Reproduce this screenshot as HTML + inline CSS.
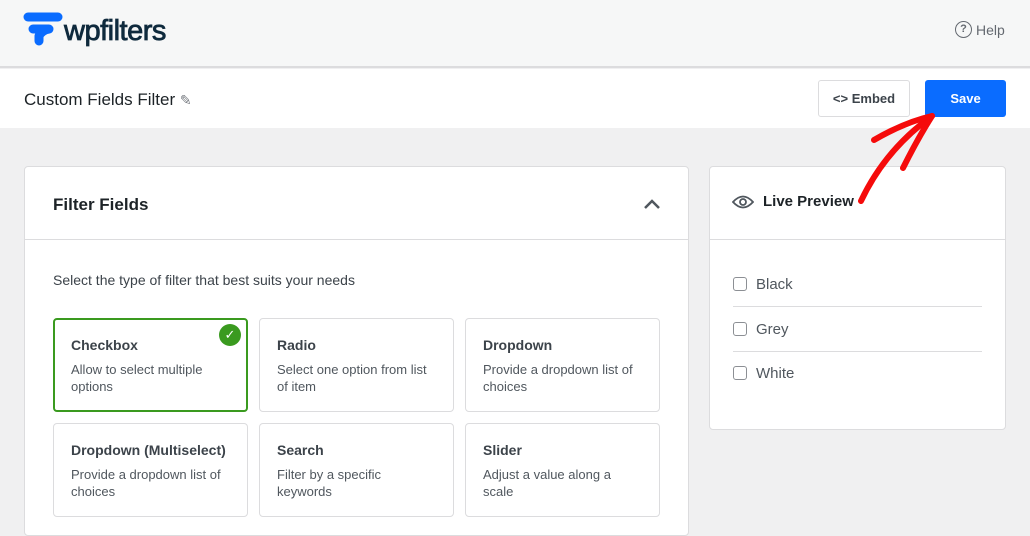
<!DOCTYPE html>
<html><head><meta charset="utf-8"><style>
*{box-sizing:border-box;margin:0;padding:0}
body{width:1030px;height:524px;overflow:hidden;background:#f0f0f1;font-family:"Liberation Sans",sans-serif;color:#1d2327;position:relative}
.top{position:absolute;left:0;top:0;width:1030px;height:68px;background:#f6f7f7;border-bottom:2px solid #dcdcde}
.bar{position:absolute;left:0;top:69px;width:1030px;height:59px;background:#fff}
.card{position:absolute;background:#fff;border:1px solid #dcdcde;border-radius:4px}
.opt{position:absolute;width:195px;height:94px;border:1px solid #dcdcde;border-radius:4px;background:#fff;padding:18px 17px}
.opt b{display:block;font-size:14px;color:#3c434a;margin-bottom:8px}
.opt span{display:block;font-size:13px;line-height:17px;color:#50575e}
.cb{position:absolute;left:733px;font-size:15px;color:#50575e}
.cb i{display:inline-block;width:14px;height:14px;border:1.5px solid #8c8f94;border-radius:3px;vertical-align:-2px;margin-right:9px}
.sep{position:absolute;left:733px;width:249px;height:1px;background:#dcdcde}
</style></head><body>
<div class="top"></div>
<svg style="position:absolute;left:22px;top:11px" width="42" height="38" viewBox="0 0 42 38"><path d="M6 6H36" stroke="#0a6cff" stroke-width="9" stroke-linecap="round"/><path d="M11 18H27Q20 19 17 25L17 30" stroke="#0a6cff" stroke-width="9" stroke-linecap="round" stroke-linejoin="round" fill="none"/></svg>
<div style="position:absolute;left:64px;top:15px;font-size:29px;color:#0f2a3d;letter-spacing:-0.5px;-webkit-text-stroke:0.8px #0f2a3d">wpfilters</div>
<div style="position:absolute;left:955px;top:21px;font-size:14px;color:#646970;display:flex;align-items:center;gap:4px;height:17px"><span style="display:inline-block;width:17px;height:17px;border:1.5px solid #646970;border-radius:50%;font-size:11px;text-align:center;line-height:14px;font-weight:bold">?</span>Help</div>
<div class="bar"></div>
<div style="position:absolute;left:24px;top:90px;font-size:17px;color:#1d2327">Custom Fields Filter <span style="color:#787c82;font-size:14px">✎</span></div>
<div style="position:absolute;left:818px;top:80px;width:92px;height:37px;border:1px solid #dcdcde;border-radius:3px;background:#fff;font-size:13px;font-weight:bold;color:#3c434a;text-align:center;line-height:35px">&lt;&gt; Embed</div>
<div style="position:absolute;left:925px;top:80px;width:81px;height:37px;border-radius:3px;background:#0a6cff;font-size:13px;font-weight:bold;color:#fff;text-align:center;line-height:37px">Save</div>
<div class="card" style="left:24px;top:166px;width:665px;height:370px">
<div style="position:absolute;left:28px;top:28px;font-size:17px;font-weight:bold;color:#1d2327">Filter Fields</div>
<svg style="position:absolute;left:617px;top:30px" width="20" height="14"><path d="M3 11L10 4L17 11" stroke="#50575e" stroke-width="2.5" fill="none"/></svg>
<div style="position:absolute;left:0;top:72px;width:663px;height:1px;background:#dcdcde"></div>
<div style="position:absolute;left:28px;top:105px;font-size:14px;color:#3c434a">Select the type of filter that best suits your needs</div>
</div>
<div class="opt" style="left:53px;top:318px;border:2px solid #3a9a1f;padding:17px 16px"><b>Checkbox</b><span>Allow to select multiple options</span></div>
<div style="position:absolute;left:219px;top:324px;width:22px;height:22px;border-radius:50%;background:#3a9a1f;color:#fff;font-size:13px;text-align:center;line-height:22px">✓</div>
<div class="opt" style="left:259px;top:318px"><b>Radio</b><span>Select one option from list of item</span></div>
<div class="opt" style="left:465px;top:318px"><b>Dropdown</b><span>Provide a dropdown list of choices</span></div>
<div class="opt" style="left:53px;top:423px"><b>Dropdown (Multiselect)</b><span>Provide a dropdown list of choices</span></div>
<div class="opt" style="left:259px;top:423px"><b>Search</b><span>Filter by a specific keywords</span></div>
<div class="opt" style="left:465px;top:423px"><b>Slider</b><span>Adjust a value along a scale</span></div>
<div class="card" style="left:709px;top:166px;width:297px;height:264px">
<div style="position:absolute;left:0;top:72px;width:295px;height:1px;background:#dcdcde"></div>
</div>
<svg style="position:absolute;left:732px;top:194px" width="22" height="16"><path d="M1 8Q11 -3 21 8Q11 19 1 8Z" stroke="#50575e" stroke-width="1.8" fill="none"/><circle cx="11" cy="8" r="3" stroke="#50575e" stroke-width="1.8" fill="none"/></svg>
<div style="position:absolute;left:763px;top:193px;font-size:15px;font-weight:bold;color:#1d2327">Live Preview</div>
<div class="cb" style="top:276px"><i></i>Black</div>
<div class="sep" style="top:306px"></div>
<div class="cb" style="top:321px"><i></i>Grey</div>
<div class="sep" style="top:351px"></div>
<div class="cb" style="top:365px"><i></i>White</div>
<svg style="position:absolute;left:0;top:0" width="1030" height="524"><g stroke="#f50b0b" stroke-width="6" stroke-linecap="round" fill="none"><path d="M861 201Q885 150 932 116"/><path d="M874 140Q905 122 932 116"/><path d="M903 168Q918 138 932 116"/></g></svg>
</body></html>
